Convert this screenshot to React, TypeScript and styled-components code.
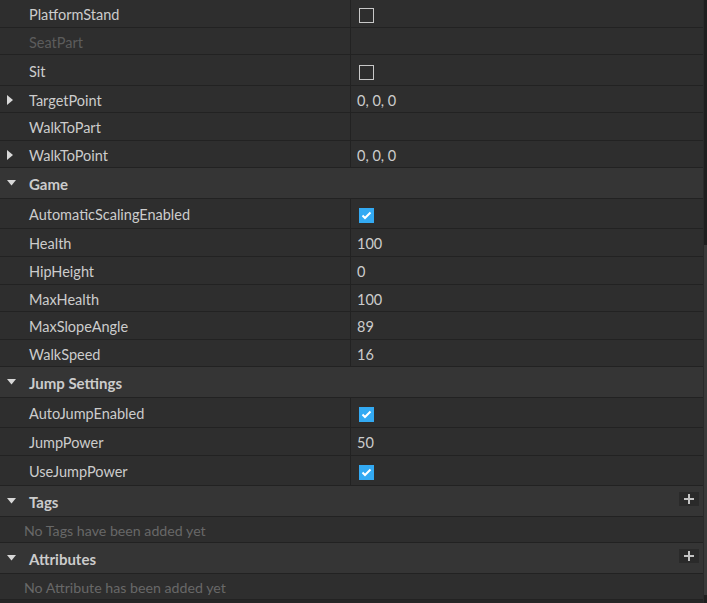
import React from "react";
import styled, { createGlobalStyle } from "styled-components";

const GlobalStyle = createGlobalStyle`
  html, body { margin: 0; padding: 0; background: #262626; }
  body { font-family: Lato, "Noto Sans", "Liberation Sans", sans-serif; }
  * { box-sizing: border-box; }
`;

const Panel = styled.div`
  display: flex;
  width: 707px;
  height: 603px;
  overflow: hidden;
  background: #262626;
`;

const List = styled.div`
  display: flex;
  flex-direction: column;
  width: 703px;
  flex: none;
`;

const ScrollTrack = styled.div`
  display: flex;
  flex-direction: column;
  width: 4px;
  background: #1f1f1f;
  border-left: 1px solid #2a2a2a;
`;

const ScrollThumb = styled.div`
  margin-top: 245px;
  height: 350px;
  background: #3a3a3a;
`;

const PropRow = styled.div<{ $h: number }>`
  display: grid;
  grid-template-columns: 350px 1fr;
  height: ${(p) => p.$h}px;
  background: #2e2e2e;
  border-bottom: 1px solid #222222;
  font-size: 14.5px;
  color: #cccccc;
`;

const NameCell = styled.div<{ $disabled?: boolean }>`
  display: flex;
  align-items: center;
  padding-top: 2px;
  color: ${(p) => (p.$disabled ? "#5c5c5c" : "#cccccc")};
  white-space: nowrap;
`;

const ArrowSlot = styled.div`
  width: 29px;
  flex: none;
  display: flex;
  align-items: center;
  padding-left: 7px;
`;

const ValueCell = styled.div`
  display: flex;
  align-items: center;
  border-left: 1px solid #222222;
  padding-left: 6px;
`;

const ValueText = styled.span`
  padding-top: 2px;
`;

const Box = styled.div<{ $checked: boolean }>`
  width: 15px;
  height: 15px;
  margin-left: 2px;
  margin-top: 4px;
  display: flex;
  align-items: center;
  justify-content: center;
  background: ${(p) => (p.$checked ? "#33aaf3" : "transparent")};
  border: ${(p) => (p.$checked ? "none" : "1px solid #c8c8c8")};
`;

const HeaderRow = styled.div<{ $h: number }>`
  display: flex;
  align-items: center;
  height: ${(p) => p.$h}px;
  background: #353535;
  border-bottom: 1px solid #222222;
  font-size: 15px;
  font-weight: 700;
  color: #cccccc;
`;

const HeaderTitle = styled.span`
  flex: 1;
  padding-top: 2px;
`;

const AddButton = styled.div`
  width: 20px;
  height: 14px;
  margin-right: 4px;
  margin-top: -4px;
  background: #2a2a2a;
  display: flex;
  align-items: center;
  justify-content: center;
`;

const InfoRow = styled.div<{ $h: number }>`
  display: flex;
  align-items: center;
  height: ${(p) => p.$h}px;
  padding-left: 24px;
  padding-top: 2px;
  background: #2e2e2e;
  border-bottom: 1px solid #222222;
  font-size: 14.2px;
  color: #686868;
`;

const RightArrow = () => (
  <svg width="7" height="10" viewBox="0 0 7 10">
    <polygon points="0,0 6,5 0,10" fill="#d8d8d8" />
  </svg>
);

const DownArrow = () => (
  <svg width="9" height="6" viewBox="0 0 9 6">
    <polygon points="0,0 9,0 4.5,5.5" fill="#d8d8d8" />
  </svg>
);

const CheckMark = () => (
  <svg width="11" height="9" viewBox="0 0 11 9">
    <polyline points="1.5,4.5 4,7 9.5,1.5" fill="none" stroke="#ffffff" strokeWidth="2" />
  </svg>
);

const Plus = () => (
  <svg width="10" height="10" viewBox="0 0 10 10">
    <rect x="0" y="4" width="10" height="2" fill="#c4c4c4" />
    <rect x="4" y="0" width="2" height="10" fill="#c4c4c4" />
  </svg>
);

type Item =
  | { kind: "prop"; name: string; h: number; value?: string; check?: boolean; expand?: boolean; disabled?: boolean }
  | { kind: "header"; name: string; h: number; add?: boolean }
  | { kind: "info"; name: string; h: number };

const items: Item[] = [
  { kind: "prop", name: "PlatformStand", h: 28, check: false },
  { kind: "prop", name: "SeatPart", h: 27, disabled: true },
  { kind: "prop", name: "Sit", h: 31, check: false },
  { kind: "prop", name: "TargetPoint", h: 27, value: "0, 0, 0", expand: true },
  { kind: "prop", name: "WalkToPart", h: 28 },
  { kind: "prop", name: "WalkToPoint", h: 27, value: "0, 0, 0", expand: true },
  { kind: "header", name: "Game", h: 31 },
  { kind: "prop", name: "AutomaticScalingEnabled", h: 30, check: true },
  { kind: "prop", name: "Health", h: 28, value: "100" },
  { kind: "prop", name: "HipHeight", h: 28, value: "0" },
  { kind: "prop", name: "MaxHealth", h: 27, value: "100" },
  { kind: "prop", name: "MaxSlopeAngle", h: 28, value: "89" },
  { kind: "prop", name: "WalkSpeed", h: 27, value: "16" },
  { kind: "header", name: "Jump Settings", h: 31 },
  { kind: "prop", name: "AutoJumpEnabled", h: 30, check: true },
  { kind: "prop", name: "JumpPower", h: 28, value: "50" },
  { kind: "prop", name: "UseJumpPower", h: 30, check: true },
  { kind: "header", name: "Tags", h: 31, add: true },
  { kind: "info", name: "No Tags have been added yet", h: 26 },
  { kind: "header", name: "Attributes", h: 31, add: true },
  { kind: "info", name: "No Attribute has been added yet", h: 26 },
];

export default function App() {
  return (
    <>
      <GlobalStyle />
      <Panel>
        <List>
          {items.map((it) => {
            if (it.kind === "header") {
              return (
                <HeaderRow key={it.name} $h={it.h}>
                  <ArrowSlot>
                    <DownArrow />
                  </ArrowSlot>
                  <HeaderTitle>{it.name}</HeaderTitle>
                  {it.add && (
                    <AddButton>
                      <Plus />
                    </AddButton>
                  )}
                </HeaderRow>
              );
            }
            if (it.kind === "info") {
              return (
                <InfoRow key={it.name} $h={it.h}>
                  {it.name}
                </InfoRow>
              );
            }
            return (
              <PropRow key={it.name} $h={it.h}>
                <NameCell $disabled={it.disabled}>
                  <ArrowSlot>{it.expand && <RightArrow />}</ArrowSlot>
                  {it.name}
                </NameCell>
                <ValueCell>
                  {it.check !== undefined ? (
                    <Box $checked={it.check}>{it.check && <CheckMark />}</Box>
                  ) : (
                    <ValueText>{it.value}</ValueText>
                  )}
                </ValueCell>
              </PropRow>
            );
          })}
        </List>
        <ScrollTrack>
          <ScrollThumb />
        </ScrollTrack>
      </Panel>
    </>
  );
}
